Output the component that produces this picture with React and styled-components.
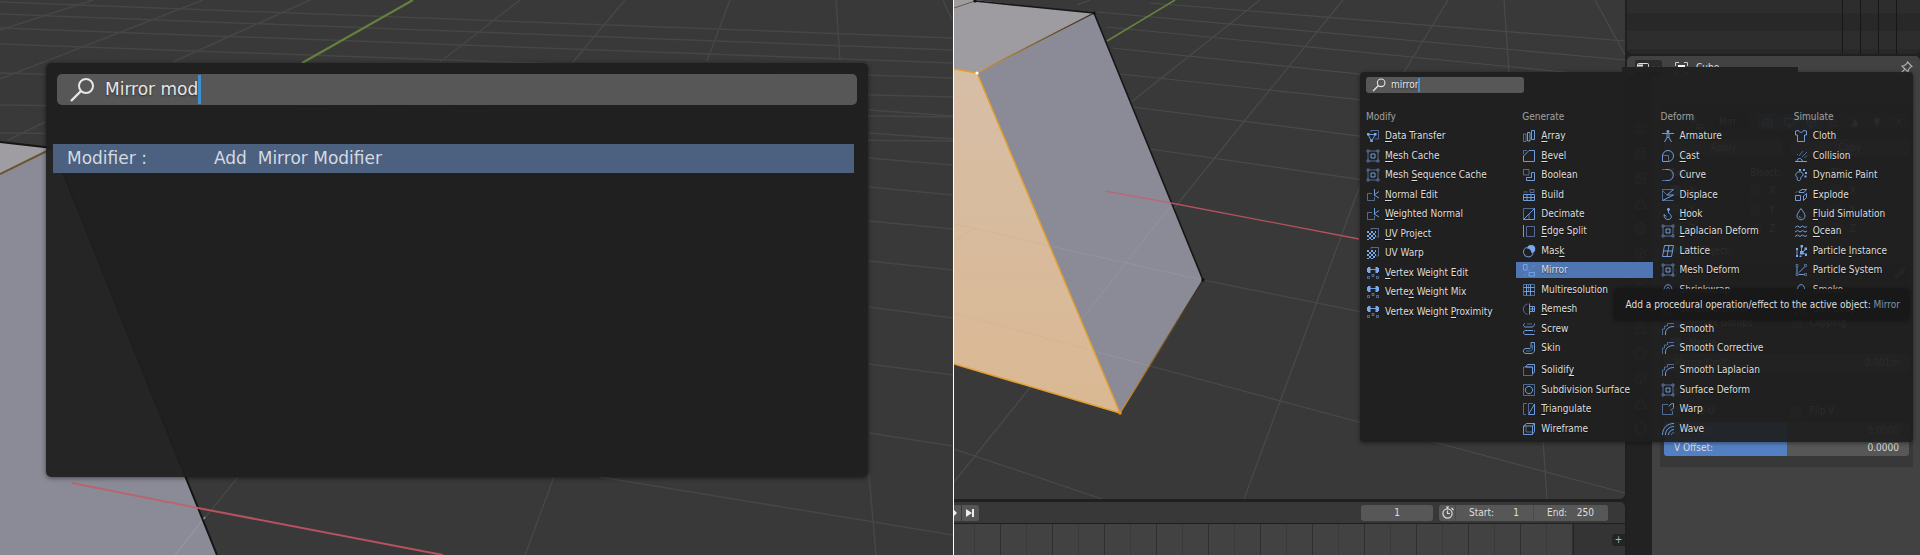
import React from "react";
import styled, { createGlobalStyle } from "styled-components";
import {
  Box,
  Camera,
  ChevronDown,
  Circle,
  Globe,
  Image,
  Monitor,
  Pipette,
  Printer,
  Triangle,
  Wrench,
  X,
} from "lucide-react";

const colors = {
  gap: "#202020",
  area: "#424242",
  text: "#dedede",
  muted: "#a0a0a0",
  field: "#575757",
  accent: "#5380c2",
  selected: "#4f76b3",
  iconBlue: "#78a8ee",
};

const GlobalStyle = createGlobalStyle`
  * {
    box-sizing: border-box;
  }
  body {
    margin: 0;
    background: ${colors.gap};
    color: ${colors.text};
    font-family: "DejaVu Sans Condensed", "DejaVu Sans", sans-serif;
    font-size: 10px;
    line-height: 16px;
  }
  button, input {
    font: inherit;
    color: inherit;
    border: 0;
    margin: 0;
    padding: 0;
    background: none;
  }
  ul {
    margin: 0;
    padding: 0;
    list-style: none;
  }
`;

const Page = styled.main`
  display: grid;
  grid-template-columns: minmax(0, 953fr) 1px minmax(0, 966fr);
  min-height: 100vh;
  background: #fff;
  overflow: hidden;
`;

/* ---------- shared ---------- */

const Scene = styled.svg`
  position: absolute;
  inset: 0;
  width: 100%;
  height: 100%;
`;

const SearchBox = styled.label`
  display: flex;
  align-items: center;
  height: ${(p) => (p.$large ? "31px" : "16px")};
  padding-left: ${(p) => (p.$large ? "12px" : "6px")};
  gap: ${(p) => (p.$large ? "10px" : "5px")};
  border-radius: ${(p) => (p.$large ? "5px" : "3px")};
  background: ${colors.field};
  color: #e6e6e6;
  svg {
    width: ${(p) => (p.$large ? "26px" : "14px")};
    height: ${(p) => (p.$large ? "26px" : "14px")};
  }
`;

const SearchInput = styled.input`
  field-sizing: content;
  outline: none;
  text-shadow: 0 1px 2px rgba(0, 0, 0, 0.5);
`;

const SearchEntry = styled.span`
  display: flex;
  align-items: center;
  height: 100%;
  &::after {
    content: "";
    width: ${(p) => (p.$large ? "3px" : "2px")};
    height: calc(100% - 2px);
    background: #3a8fd6;
  }
`;

const Glass = () => (
  <svg viewBox="0 0 26 26" fill="none" stroke="currentColor" strokeWidth="2">
    <circle cx="17" cy="9" r="7" />
    <path d="M12 14L2 24" strokeWidth="2.4" />
  </svg>
);

const Search = ({ large, value }) => (
  <SearchBox $large={large}>
    <Glass />
    <SearchEntry $large={large}>
      <SearchInput aria-label="Search" defaultValue={value} />
    </SearchEntry>
  </SearchBox>
);

/* ---------- left: operator search ---------- */

const LeftPane = styled.section`
  position: relative;
  display: flex;
  padding: 63px 85px 78px 46px;
  background: #393939;
  font-family: "DejaVu Sans", sans-serif;
  font-size: 17px;
  line-height: 29px;
`;

const OperatorPopup = styled.div`
  position: relative;
  flex: 1;
  display: flex;
  flex-direction: column;
  gap: 39px;
  padding: 11px 11px 0 7px;
  border-radius: 5px;
  background: rgba(31, 31, 31, 0.94);
  box-shadow: 0 1px 5px rgba(0, 0, 0, 0.5);
  ${SearchBox} {
    margin-left: 4px;
  }
`;

const OperatorResult = styled.button`
  display: flex;
  height: 29px;
  margin-right: 3px;
  padding-left: 14px;
  background: #4c607f;
  color: #d4dae2;
  line-height: 28px;
  text-align: left;
  white-space: pre;
`;

const ResultKind = styled.span`
  width: 147px;
`;

const LeftScene = () => (
  <Scene viewBox="0 0 953 555" preserveAspectRatio="xMinYMin slice" fill="none">
    <rect width="953" height="555" fill="#393939" />
    <g stroke="#464646" strokeWidth="1.5">
      <path d="M0 2L953 38M0 14L953 50M0 28L953 63M0 44L953 78M0 73L953 97M0 105L953 117M0 133L953 141" />
      <path d="M869 110L953 116M869 133L953 139M869 158L953 165M869 187L953 195M869 221L953 229M869 261L953 270M869 307L953 318M869 364L953 375M869 433L953 446M600 477L953 535" />
      <path d="M0 30L93 0M0 79L203 0M8 140L45 122M173 62L310 0M440 62L520 0M573 62L625 0M707 61L730 0M840 61L836 0M943 0L952 20" />
      <path d="M525 555L554 477M876 555L869 474M175 555L238 477" />
    </g>
    <path d="M413 0L302 63" stroke="#64803c" strokeWidth="2.2" />
    <path d="M0 142L53 148L0 174Z" fill="#9f9da2" />
    <path d="M0 174L53 148L217 555H0Z" fill="#8b8b98" />
    <path d="M175 555L205 517" stroke="#96949e" strokeWidth="1.5" />
    <path d="M0 142L53 148L217 555" stroke="#151515" strokeWidth="2" />
    <path d="M0 174L53 148" stroke="#6c5430" strokeWidth="2" />
    <path d="M72 483L198 508" stroke="#b86472" strokeWidth="2" />
    <path d="M198 508L443 555" stroke="#b4525f" strokeWidth="2" />
  </Scene>
);

/* ---------- right: editor layout ---------- */

const Editor = styled.section`
  position: relative;
  display: grid;
  grid-template-columns: minmax(0, 1fr) 293px;
  gap: 2px;
  background: ${colors.gap};
`;

const MainColumn = styled.div`
  display: flex;
  flex-direction: column;
  gap: 3px;
`;

const Viewport = styled.div`
  position: relative;
  flex: 1;
  min-height: 499px;
  border-radius: 0 0 5px 0;
  background: #393939;
  overflow: hidden;
`;

const ViewScene = () => (
  <Scene viewBox="0 0 671 499" preserveAspectRatio="xMinYMin slice" fill="none">
    <defs>
      <linearGradient id="cap" x1="23" y1="73" x2="140" y2="13" gradientUnits="userSpaceOnUse">
        <stop offset="0" stopColor="#d79a35" />
        <stop offset="1" stopColor="#33291c" />
      </linearGradient>
      <linearGradient id="side" x1="166" y1="413" x2="249" y2="280" gradientUnits="userSpaceOnUse">
        <stop offset="0" stopColor="#d8912a" />
        <stop offset="1" stopColor="#2b2218" />
      </linearGradient>
      <linearGradient id="front" x1="0" y1="70" x2="0" y2="413" gradientUnits="userSpaceOnUse">
        <stop offset="0" stopColor="#d6bea6" />
        <stop offset="1" stopColor="#dab893" />
      </linearGradient>
    </defs>
    <g stroke="#4a4a4a" strokeWidth="1.2">
      <path d="M196 3L671 41M143 12L671 60M153 27L671 78M158 48L671 102M166 74L671 128M179 107L671 170M196 149L671 218M249 280L671 365M196 366L405 422L671 493M0 449L148 499" />
      <path d="M136 0L123 5M306 0L176 103M389 0L288 124L0 482M494 0L450 72M550 0L555 72M641 0L671 55M405 188L290 499M589 440L593 499" />
    </g>
    <path d="M221 0L153 41" stroke="#66833d" strokeWidth="1.5" />
    <path d="M0 0H21L140 13L23 73L0 69Z" fill="#9e9ca1" />
    <path d="M140 13L249 280L166 413L23 73Z" fill="#8b8b98" />
    <path d="M0 69L23 73L166 413L0 364Z" fill="url(#front)" />
    <path d="M96 246L249 280M127 320L219 203M140 351L196 366" stroke="#94939d" />
    <path d="M0 224L20 228L96 246M0 242L20 228M0 313L140 351" stroke="#d4b594" />
    <path d="M0 8L21 1" stroke="#6b5a41" />
    <path d="M21 1L140 13L249 280" stroke="#161616" strokeWidth="1.6" />
    <path d="M23 73L140 13" stroke="url(#cap)" strokeWidth="1.4" />
    <path d="M166 413L249 280" stroke="url(#side)" strokeWidth="1.4" />
    <path d="M0 69L23 73L166 413L0 364" stroke="#e29f31" strokeWidth="1.5" />
    <path d="M151 191L217 203" stroke="#b86876" strokeWidth="1.3" />
    <path d="M217 203L405 239" stroke="#b2525f" strokeWidth="1.3" />
    <circle cx="21" cy="1" r="1.6" fill="#111" />
    <circle cx="140" cy="13" r="1.6" fill="#111" />
    <circle cx="249" cy="280" r="1.8" fill="#111" />
    <circle cx="23" cy="73" r="1.6" fill="#fff" />
    <circle cx="166" cy="413" r="1.8" fill="#f58b18" />
  </Scene>
);

const Timeline = styled.div`
  border-radius: 0 5px 0 0;
  background: #383838;
`;

const TimelineHeader = styled.div`
  display: flex;
  align-items: center;
  height: 21px;
  padding-right: 17px;
  gap: 6px;
`;

const TransportGroup = styled.div`
  display: flex;
  gap: 1px;
  margin-right: auto;
`;

const TransportButton = styled.button`
  display: flex;
  align-items: center;
  justify-content: center;
  width: ${(p) => (p.$cut ? "7px" : "17px")};
  height: 16px;
  border-radius: ${(p) => (p.$cut ? "0" : "0 3px 3px 0")};
  background: #565656;
`;

const FrameInput = styled.input`
  width: 72px;
  height: 16px;
  border-radius: 3px;
  background: ${colors.field};
  text-align: center;
`;

const RangeGroup = styled.div`
  display: flex;
  gap: 1px;
  height: 16px;
  border-radius: 3px;
  background: #4a4a4a;
  overflow: hidden;
`;

const ClockButton = styled.button`
  display: flex;
  align-items: center;
  justify-content: center;
  width: 16px;
  background: ${colors.field};
`;

const RangeField = styled.label`
  display: flex;
  justify-content: space-between;
  width: ${(p) => p.$width};
  padding: 0 14px 0 13px;
  background: ${colors.field};
  input {
    width: 24px;
    text-align: right;
  }
`;

const Tracks = styled.div`
  display: flex;
  height: 32px;
  border-top: 1px solid #1f1f1f;
`;

const ActiveRange = styled.div`
  flex: 1;
  border-right: 1px solid #242424;
  background: repeating-linear-gradient(
      90deg,
      transparent 0 46px,
      #303030 46px 47px,
      transparent 47px 52px
    ),
    repeating-linear-gradient(
      90deg,
      #424242 0 20px,
      #3a3a3a 20px 21px,
      #424242 21px 52px
    );
`;

const InactiveRange = styled.div`
  display: flex;
  align-items: center;
  justify-content: flex-end;
  width: 51px;
  background: #343434;
`;

const AddButton = styled.button`
  width: 13px;
  height: 12px;
  border-radius: 3px 0 0 3px;
  background: #242424;
  color: #b5b5b5;
  line-height: 12px;
`;

/* ---------- right: side column ---------- */

const SideColumn = styled.div`
  display: flex;
  flex-direction: column;
  gap: 2px;
`;

const Outliner = styled.div`
  display: flex;
  justify-content: flex-end;
  height: 54px;
  padding-right: 23px;
  border-radius: 0 0 5px 5px;
  background: linear-gradient(
    #2d2d2d 0 13px,
    #282828 13px 31px,
    #2d2d2d 31px 49px,
    #282828 49px
  );
`;

const OutlinerColumn = styled.div`
  width: 18px;
  border-left: 1px solid #171717;
  &:last-child {
    width: 1px;
  }
`;

const Properties = styled.div`
  flex: 1;
  border-radius: 5px 5px 0 0;
  background: ${colors.area};
  overflow: hidden;
`;

const PropertiesHeader = styled.div`
  display: flex;
  align-items: center;
  height: 20px;
  padding: 3px 7px 0 8px;
`;

const EditorButton = styled.button`
  display: flex;
  align-items: center;
  justify-content: center;
  gap: 3px;
  width: 27px;
  height: 16px;
  margin-right: 13px;
  border-radius: 3px;
  background: #2b2b2b;
`;

const ObjectName = styled.span`
  flex: 1;
  margin-left: 8px;
`;

const PropertiesBody = styled.div`
  display: grid;
  grid-template-columns: 25px 1fr;
  min-height: 479px;
`;

const TabStrip = styled.div`
  padding-top: 40px;
  background: #222;
`;

const Tab = styled.button`
  display: flex;
  align-items: center;
  justify-content: center;
  width: 24px;
  height: 25px;
  margin-left: 1px;
  border-bottom: 1px solid #222;
  background: #2c2c2c;
  color: #777;
`;

const Panel = styled.div`
  align-self: start;
  display: flex;
  flex-direction: column;
  margin: 30px 7px 0 8px;
  padding: 8px 4px 11px;
  background: #383838;
`;

const PanelRow = styled.div`
  display: grid;
  grid-template-columns: ${(p) => p.$columns || "1fr"};
  align-items: center;
  gap: 8px;
  height: ${(p) => p.$height || "19px"};
  padding: 0 ${(p) => (p.$inset ? "6px" : "0")};
`;

const PanelTools = styled.div`
  display: flex;
  align-items: center;
  gap: 1px;
  height: 16px;
  padding-left: 26px;
`;

const NameInput = styled.input`
  width: 34px;
  height: 16px;
  margin: 0 8px 0 9px;
  padding-left: 5px;
  border-radius: 3px;
  background: #242424;
`;

const ToolButton = styled.button`
  display: flex;
  align-items: center;
  justify-content: center;
  flex: 1;
  height: 16px;
  background: ${(p) => (p.$active ? "#3f6795" : "#4c4c4c")};
`;

const PanelButton = styled.button`
  height: 17px;
  border-radius: 3px;
  background: #515151;
`;

const CheckLabel = styled.label`
  display: flex;
  align-items: center;
  gap: 8px;
  input {
    appearance: none;
    width: 11px;
    height: 11px;
    border-radius: 2px;
    background: #575757;
  }
  input:checked {
    background: ${colors.accent};
  }
`;

const NumberRow = styled.label`
  display: flex;
  align-items: center;
  justify-content: space-between;
  height: 17px;
  margin-bottom: ${(p) => (p.$spaced ? "10px" : "0")};
  padding: 0 10px;
  border-radius: 3px;
  background: ${(p) =>
    p.$slider
      ? `linear-gradient(90deg, ${colors.accent} 50%, ${colors.field} 50%)`
      : colors.field};
  input {
    width: 60px;
    text-align: right;
  }
`;

const PickField = styled.button`
  display: flex;
  align-items: center;
  justify-content: space-between;
  height: 17px;
  margin-bottom: 32px;
  padding: 0 3px;
  border-radius: 3px;
  background: #2c2c2c;
`;

/* ---------- right: add modifier menu ---------- */

const ModifierMenu = styled.div`
  position: absolute;
  top: 72px;
  right: 7px;
  width: 553px;
  padding: 5px 0 4px;
  border-radius: 4px;
  background: rgba(31, 31, 31, 0.94);
  box-shadow: 0 1px 4px rgba(0, 0, 0, 0.45);
  ${SearchBox} {
    width: 158px;
    margin-left: 6px;
  }
  &::before {
    content: "";
    position: absolute;
    bottom: 100%;
    left: 262px;
    width: 176px;
    height: 5px;
    background: #212121;
  }
`;

const MenuColumns = styled.div`
  display: grid;
  grid-template-columns: 156fr 138fr 133fr 125fr;
  align-items: start;
  margin-top: 15px;
`;

const MenuHeading = styled.h2`
  margin: 0;
  padding: 1px 6px;
  height: 18px;
  color: ${colors.muted};
  font-size: 10px;
  font-weight: 400;
`;

const MenuGroup = styled.ul`
  & + & {
    margin-top: -3px;
  }
  & + & + & {
    margin-top: 2px;
  }
  li {
    display: flex;
    align-items: center;
    height: 19px;
  }
  li:nth-child(odd) {
    height: 20px;
  }
`;

const MenuItem = styled.button`
  display: flex;
  align-items: center;
  gap: 5px;
  width: calc(100% - 2px);
  height: 16px;
  padding-left: 6px;
  background: ${(p) => (p.$selected ? colors.selected : "none")};
  white-space: nowrap;
  text-shadow: 0 1px 1px rgba(0, 0, 0, 0.5);
  svg {
    flex: none;
    color: ${colors.iconBlue};
  }
  u {
    text-underline-offset: 2px;
  }
`;

const Tooltip = styled.div`
  position: absolute;
  top: 289px;
  right: 11px;
  padding: 8px 9px 7px 12px;
  border-radius: 4px;
  background: rgba(24, 24, 24, 0.96);
  box-shadow: 0 0 4px rgba(0, 0, 0, 0.5);
  white-space: nowrap;
  b {
    color: #7e92b0;
    font-weight: 400;
  }
`;

// d: bright strokes, dim: faint strokes, fill: solid parts
const cage = {
  d: "M5 5h4v4h-4z",
  dim: "M3 2h8M3 12h8M2 3v8M12 3v8M1 1h2v2h-2zM11 1h2v2h-2zM1 11h2v2h-2zM11 11h2v2h-2z",
};
const normals = { d: "M8.500 7.500V1M8 7L13 3.500M8 7L13 10", dim: "M6 5.500H1.500V12.500H8.500V9" };
const uv = {
  dim: "M5 3V1.500H12.500V10H10.500",
  fill: "M1 4h2v2h-2zM5 4h2v2h-2zM3 6h2v2h-2zM7 6h2v2h-2zM1 8h2v2h-2zM5 8h2v2h-2zM3 10h2v2h-2zM7 10h2v2h-2zM9 4h1v2h-1zM9 8h1v2h-1zM1 12h2v1h-2zM5 12h2v1h-2z",
};
const weight = {
  d: "M4 3.500H10",
  dim: "M1.500 10.500h2v2h-2zM6 8.500h2v2h-2zM10.500 10.500h2v2h-2z",
  fill: "M2 1h2.500v6h-2.500zM9.500 1h2.500v6h-2.500zM1 2h1v4h-1zM12 2h1v4h-1z",
};
const smooth = { d: "M4.500 13V11C4.500 7 8 4.500 13 4.500", dim: "M1.500 13V7H3.500V4H6.500V1.500H13" };

const icons = {
  transfer: {
    d: "M2 5.500H9.500L5.500 12Z",
    dim: "M5 3V1.500H12.500V10H9",
    fill: "M1 4h2.500v2.500h-2.500zM8 4h2.500v2.500h-2.500zM4.300 10.500h2.500v2.500h-2.500z",
  },
  cage,
  normals,
  uv,
  weight,
  array: { d: "M9.500 1.500h3v9h-3zM5.500 3.500h2.500v8.500h-2.500z", dim: "M1.500 5h2.500v7.500h-2.500z" },
  bevel: { d: "M1.500 12.500V7L7 1.500H12.500V12.500Z", dim: "M1.500 5V1.500H5" },
  boolean: { d: "M9.500 4.500H12.500V12.500H4.500V9.500H9.500Z", dim: "M1.500 1.500h5.500v5.500h-5.500z" },
  build: { d: "M1.500 6.500H12.500V12.500H1.500ZM1.500 9.500H12.500M5 6.500V9.500M9 9.500V12.500M5 9.500V12.500M9 6.500V9.500", dim: "M1.500 4h4M8 1.500h4v3h-4z" },
  decimate: { d: "M1.500 12.500L12.500 1.500V12.500Z", dim: "M1.500 12.500V1.500H12.500M7 7V12.500" },
  edgeSplit: { d: "M1.500 1V13", dim: "M4.500 2.500h8v10h-8z" },
  mask: { d: "M5 3.500A4.800 4.800 0 1 0 11 9", fill: "M9 1A4 4 0 0 1 9.500 9C9.500 6.500 7.500 4.500 5 4.500A4 4 0 0 1 9 1Z" },
  mirror: { d: "M1.500 1.500h3.500v5.500h-3.500zM7 9.500h5.500v3.500h-5.500z", dim: "M2 12.500L4 10.500M6 8.500L8 6.500M10 4.500L12.500 2" },
  multires: { d: "M1.500 4.500H12.500M1.500 8.500H12.500M4.500 1.500V12.500M8.500 1.500V12.500", dim: "M1.500 1.500h11v11h-11zM6.500 1.500V8.500" },
  remesh: { d: "M7.500 1.500V12.500M7.500 4.500H10.500V9.500H7.500M7.500 7H12.500V4.500H10.500M12.500 7V9.500H10.500", dim: "M5.500 2C0 3 0 11 5.500 12.500" },
  screw: { d: "M3 1.500C1 2 1 4.500 3 5H10C12 4.500 12.500 3 12.500 1.500M3 8.500H11M3 8.500C1 9 1 12 3 12.500H9L12.500 12.500", dim: "M5 2H10M12.500 8V10" },
  skin: { d: "M9 1.500H12.500V9C12.500 11 11 12.500 9 12.500H4C0.500 12.500 0.500 7.500 4 7.500H8L9 6.500Z", dim: "M4 10H8.500L10.500 8V4" },
  solidify: { d: "M3.500 4L5.500 1.500H12.500V9L10.500 11V4Z", dim: "M1.500 4h9v8.500h-9z" },
  subsurf: { d: "M7 3.300A3.700 3.700 0 1 1 6.900 3.300Z", dim: "M1.500 1.500h11v11h-11z" },
  triangulate: { d: "M6.500 12.500L12.500 2V12.500Z", dim: "M5 1.500H1.500V12.500H4M6.500 11V1.500H11" },
  wire: { d: "M1.500 4h9v8.500h-9zM1.500 4L4.500 1.500H12.500V9.500L10.500 12M10.500 4L12.500 1.500", dim: "M4 4V10M4 10H10" },
  armature: { d: "M1 4.500H13M6 5V8.500L3.500 13M8 5V8.500L10.500 13M6 8.500H8", fill: "M7 1A1.500 1.500 0 1 1 6.900 1Z" },
  cast: { d: "M1.500 12.500V7A5.500 5.500 0 1 1 7 12.500Z", dim: "M2 6.500H7.500V12" },
  curve: { d: "M5 1.500H7C14 1.500 14 12.500 7 12.500H5", dim: "M1 1.500H5M1 12.500H5" },
  displace: { d: "M12.500 1.500L6 7H12.500L1.500 12.500", dim: "M1.500 1.500H12.500M1.500 1.500V12.500H12.500M2 3L6 7" },
  hook: { d: "M7.500 3.500V6C11 7.500 11.500 12.500 7 12.500C4 12.500 3 10 3 7.500L5.500 9.500", fill: "M7.500 1A1.500 1.500 0 1 1 7.400 1Z" },
  lattice: { d: "M3.500 1.500H12.500L10.500 12.500H1.500ZM2.500 7H11.500M8 1.500L6 12.500" },
  shrinkwrap: { d: "M3 13V7C3 0 11 0 11 7V13M5.500 12V7C5.500 3.500 8.500 3.500 8.500 7V12", dim: "M1.500 13V6" },
  bend: { d: "M3 13C3 8 6 4 12 3", dim: "M1.500 1.500h8v11h-8z" },
  smooth,
  warp: { d: "M8 4.500C9 2 11 1.500 12.500 1.500V5.500C12 7 11 8 9.500 8", dim: "M7 2.500H1.500V12.500H11.500V9" },
  wave: { d: "M1.500 13C1.500 6 6 1.500 13 1.500M4.500 13C4.500 8 8 4.500 13 4.500M7.500 13C7.500 10 10 7.500 13 7.500", dim: "M10.500 13C10.500 11.500 11.500 10.500 13 10.500" },
  cloth: { d: "M1.500 2L4.500 1.500C5 4 9 4 9.500 1.500L12.500 2V6H10.500V12.500H3.500V6H1.500Z" },
  collision: { d: "M3 12.500C2.500 8.500 8.500 8.500 8.500 12.500M1 12.500H13", dim: "M5 7L9 2M8 8L13 3M10.500 9L13 6.500M3 6L4 5" },
  paint: { d: "M5.500 12.500C3.500 13 2.500 11.500 3.500 9.500C1 8.500 1 4.500 4.500 4C7.500 3.500 9.500 4.500 9 7C8.500 9 6.500 8.500 6.500 10.500C6.500 11.500 6.500 12 5.500 12.500Z", fill: "M5 1h2v2h-2zM9 1h2v2h-2zM11 4h2v2h-2zM10.500 7.500h2v2h-2z" },
  explode: { d: "M1.500 7.500h5v5h-5zM5 3.500L8 1.500H12.500L10 4.500H5ZM9.500 8L12.500 5.500V9.500L9.500 12.500Z", dim: "M1.500 4.500L3.500 3.500" },
  fluid: { d: "M7 1.500C9.500 5 11 7 11 9C11 14 3 14 3 9C3 7 4.500 5 7 1.500Z", dim: "M5.500 9V10.500H7.500" },
  ocean: { d: "M1 3.500L3.500 2L6 3.500L8.500 2L11 3.500L13 2.500M1 8L3.500 6.500L6 8L8.500 6.500L11 8L13 7M1 12.500L3.500 11L6 12.500L8.500 11L11 12.500L13 11.500" },
  instance: { d: "M7.500 2V8.500L12.500 5M7.500 8.500L13 11M3 12V5", fill: "M6.500 1h2.500v2.500h-2.500zM10.500 3.500h2.500v2.500h-2.500zM6 7h3.500v3.500h-3.500zM11 9.500h2v2.500h-2zM2 4h2v2h-2zM2 11h2v2h-2zM5.500 11.500h2v1.500h-2z" },
  particles: { d: "M3 10V4M5 9.500L10.500 4M4.500 11.500H10", dim: "M2 1.500h2v2h-2zM10.500 1.500h2v2h-2zM2 10.500h2v2h-2zM10.500 10.500h2v2h-2z" },
  smoke: { d: "M4 11.500C0 11.500 0 6.500 3.500 6.500C3.500 0 11 0 10.500 6.500C14 6.500 14 11.500 10 11.500H9M4.500 7C5.500 9.500 8.500 9.500 9 7" },
};

const Glyph = ({ name }) => {
  const icon = icons[name];
  return (
    <svg width="14" height="14" viewBox="0 0 14 14" fill="none" stroke="currentColor" aria-hidden="true">
      {icon.dim && <path d={icon.dim} opacity="0.55" />}
      {icon.d && <path d={icon.d} opacity="0.9" />}
      {icon.fill && <path d={icon.fill} fill="currentColor" stroke="none" />}
    </svg>
  );
};

// An underscore marks the letter that is the keyboard shortcut
const menu = [
  {
    title: "Modify",
    groups: [
      [
        ["transfer", "_Data Transfer"],
        ["cage", "_Mesh Cache"],
        ["cage", "Mesh _Sequence Cache"],
        ["normals", "_Normal Edit"],
        ["normals", "_Weighted Normal"],
        ["uv", "_UV Project"],
        ["uv", "UV Warp"],
        ["weight", "_Vertex Weight Edit"],
        ["weight", "Verte_x Weight Mix"],
        ["weight", "Vertex Weight _Proximity"],
      ],
    ],
  },
  {
    title: "Generate",
    groups: [
      [
        ["array", "_Array"],
        ["bevel", "_Bevel"],
        ["boolean", "Boolean"],
        ["build", "Build"],
        ["decimate", "Decimate"],
      ],
      [
        ["edgeSplit", "_Edge Split"],
        ["mask", "Mas_k"],
        ["mirror", "Mirror"],
        ["multires", "Multiresolution"],
        ["remesh", "_Remesh"],
        ["screw", "Screw"],
        ["skin", "Skin"],
      ],
      [
        ["solidify", "Solidif_y"],
        ["subsurf", "Subdivision Surface"],
        ["triangulate", "_Triangulate"],
        ["wire", "Wireframe"],
      ],
    ],
  },
  {
    title: "Deform",
    groups: [
      [
        ["armature", "Armature"],
        ["cast", "_Cast"],
        ["curve", "Curve"],
        ["displace", "Displace"],
        ["hook", "_Hook"],
      ],
      [
        ["cage", "_Laplacian Deform"],
        ["lattice", "Lattice"],
        ["cage", "Mesh Deform"],
        ["shrinkwrap", "Shrinkwrap"],
        ["bend", "Simple Deform"],
        ["smooth", "Smooth"],
        ["smooth", "Smooth Corrective"],
      ],
      [
        ["smooth", "Smooth Laplacian"],
        ["cage", "Surface Deform"],
        ["warp", "Warp"],
        ["wave", "Wave"],
      ],
    ],
  },
  {
    title: "Simulate",
    groups: [
      [
        ["cloth", "Cloth"],
        ["collision", "Collision"],
        ["paint", "Dynamic Paint"],
        ["explode", "Explode"],
        ["fluid", "_Fluid Simulation"],
      ],
      [
        ["ocean", "_Ocean"],
        ["instance", "Particle _Instance"],
        ["particles", "Particle System"],
        ["smoke", "Smoke"],
        ["cage", "Soft Body"],
      ],
    ],
  },
];

const ItemLabel = ({ text }) => {
  const at = text.indexOf("_");
  if (at < 0) return <span>{text}</span>;
  return (
    <span>
      {text.slice(0, at)}
      <u>{text[at + 1]}</u>
      {text.slice(at + 2)}
    </span>
  );
};

const tabs = [Camera, Printer, Image, Triangle, Globe, Box, Circle, Wrench, Triangle, Circle, Box, Triangle, Circle];

const Checkbox = ({ label, checked }) => (
  <CheckLabel>
    <input type="checkbox" defaultChecked={checked} />
    {label}
  </CheckLabel>
);

const MirrorPanel = () => (
  <Panel>
    <PanelTools>
      <Glyph name="mirror" />
      <NameInput aria-label="Modifier name" defaultValue="Mirr" />
      <ToolButton $active aria-label="Render"><Camera size={11} /></ToolButton>
      <ToolButton $active aria-label="Viewport"><Monitor size={11} /></ToolButton>
      <ToolButton $active aria-label="Edit mode"><Box size={11} /></ToolButton>
      <ToolButton aria-label="Cage"><Triangle size={10} /></ToolButton>
      <ToolButton aria-label="Move up">▲</ToolButton>
      <ToolButton aria-label="Move down">▼</ToolButton>
      <ToolButton aria-label="Remove"><X size={12} /></ToolButton>
    </PanelTools>
    <PanelRow $height="35px" $columns="1fr 1fr">
      <PanelButton>Apply</PanelButton>
      <PanelButton>Copy</PanelButton>
    </PanelRow>
    <PanelRow $inset $height="16px" $columns="1fr 1fr 1fr">
      <span>Axis:</span>
      <span>Bisect:</span>
      <span>Flip:</span>
    </PanelRow>
    {["X", "Y", "Z"].map((axis) => (
      <PanelRow key={axis} $inset $columns="1fr 1fr 1fr">
        <Checkbox label={axis} checked={axis === "X"} />
        <Checkbox label={axis} />
        <Checkbox label={axis} />
      </PanelRow>
    ))}
    <PanelRow $inset $height="26px">Mirror Object:</PanelRow>
    <PickField aria-label="Mirror object">
      <Box size={11} />
      <Pipette size={12} />
    </PickField>
    <PanelRow $inset $columns="1fr 1fr">
      <Checkbox label="Vertex Groups" checked />
      <Checkbox label="Clipping" />
    </PanelRow>
    <PanelRow $inset $height="22px">
      <Checkbox label="Merge" checked />
    </PanelRow>
    <NumberRow $spaced>
      Merge Limit:
      <input defaultValue="0.001m" />
    </NumberRow>
    <PanelRow $inset>Textures:</PanelRow>
    <PanelRow $inset $height="22px" $columns="1fr 1fr">
      <Checkbox label="Flip U" />
      <Checkbox label="Flip V" />
    </PanelRow>
    <NumberRow $slider>
      U Offset:
      <input defaultValue="0.0000" />
    </NumberRow>
    <NumberRow $slider>
      V Offset:
      <input defaultValue="0.0000" />
    </NumberRow>
  </Panel>
);

const AddModifierMenu = () => (
  <ModifierMenu>
    <Search value="mirror" />
    <MenuColumns>
      {menu.map((column) => (
        <div key={column.title}>
          <MenuHeading>{column.title}</MenuHeading>
          {column.groups.map((group) => (
            <MenuGroup key={group[0][1]}>
              {group.map(([icon, text]) => (
                <li key={text}>
                  <MenuItem $selected={text === "Mirror"}>
                    <Glyph name={icon} />
                    <ItemLabel text={text} />
                  </MenuItem>
                </li>
              ))}
            </MenuGroup>
          ))}
        </div>
      ))}
    </MenuColumns>
  </ModifierMenu>
);

const App = () => {
  return (
    <>
      <GlobalStyle />
      <Page>
        <LeftPane>
          <LeftScene />
          <OperatorPopup>
            <Search large value="Mirror mod" />
            <OperatorResult>
              <ResultKind>Modifier :</ResultKind>
              <span>{"Add  Mirror Modifier"}</span>
            </OperatorResult>
          </OperatorPopup>
        </LeftPane>
        <div />
        <Editor>
          <MainColumn>
            <Viewport>
              <ViewScene />
            </Viewport>
            <Timeline>
              <TimelineHeader>
                <TransportGroup>
                  <TransportButton $cut aria-label="Next keyframe">
                    <svg width="7" height="8" fill="#ececec"><path d="M0 1L3 4L0 7Z" /></svg>
                  </TransportButton>
                  <TransportButton aria-label="Jump to end">
                    <svg width="9" height="8" fill="#ececec"><path d="M0 0L6 4L0 8ZM6 0H8V8H6Z" /></svg>
                  </TransportButton>
                </TransportGroup>
                <FrameInput aria-label="Current frame" defaultValue="1" />
                <RangeGroup>
                  <ClockButton aria-label="Use preview range">
                    <svg width="13" height="13" viewBox="0 0 13 13" fill="none" stroke="#dcdcdc" strokeWidth="1.2">
                      <circle cx="6.500" cy="7.500" r="4.600" />
                      <path d="M6.500 4.500V7.500H9M5 1H8M6.500 1V3M10.500 2L12.500 4" />
                    </svg>
                  </ClockButton>
                  <RangeField $width="77px">
                    Start:
                    <input defaultValue="1" />
                  </RangeField>
                  <RangeField $width="74px">
                    End:
                    <input defaultValue="250" />
                  </RangeField>
                </RangeGroup>
              </TimelineHeader>
              <Tracks>
                <ActiveRange />
                <InactiveRange>
                  <AddButton aria-label="Show sidebar">+</AddButton>
                </InactiveRange>
              </Tracks>
            </Timeline>
          </MainColumn>
          <SideColumn>
            <Outliner>
              <OutlinerColumn />
              <OutlinerColumn />
              <OutlinerColumn />
              <OutlinerColumn />
            </Outliner>
            <Properties>
              <PropertiesHeader>
                <EditorButton aria-label="Editor type">
                  <svg width="12" height="12" viewBox="0 0 12 12" fill="none" stroke="#dcdcdc">
                    <rect x="0.500" y="1.500" width="11" height="4" rx="1" />
                    <path d="M1 3.500H6" strokeWidth="2" />
                    <path d="M0.500 8.500H11.500" />
                  </svg>
                  <ChevronDown size={8} />
                </EditorButton>
                <svg width="13" height="12" viewBox="0 0 13 12" fill="none" stroke="#c8c8c8">
                  <path d="M0.500 4V0.500H4M9 0.500H12.500V4M0.500 8V11.500H4M9 11.500H12.500V8" />
                  <path d="M3 3H10V9H3Z" fill="#f4f4f4" stroke="none" />
                </svg>
                <ObjectName>Cube</ObjectName>
                <svg width="14" height="14" viewBox="0 0 14 14" fill="none" stroke="#b0b0b0" strokeWidth="1.2">
                  <path d="M8.500 1L13 5.500L11.500 6L9.500 8.500L9 11L3 5L5.500 4.500L8 2.500ZM5.500 8.500L1 13" />
                </svg>
              </PropertiesHeader>
              <PropertiesBody>
                <TabStrip>
                  {tabs.map((Icon, i) => (
                    <Tab key={i} aria-label={`Tab ${i + 1}`}>
                      <Icon size={13} />
                    </Tab>
                  ))}
                </TabStrip>
                <MirrorPanel />
              </PropertiesBody>
            </Properties>
          </SideColumn>
          <AddModifierMenu />
          <Tooltip>
            Add a procedural operation/effect to the active object: <b>Mirror</b>
          </Tooltip>
        </Editor>
      </Page>
    </>
  );
};

export default App;
